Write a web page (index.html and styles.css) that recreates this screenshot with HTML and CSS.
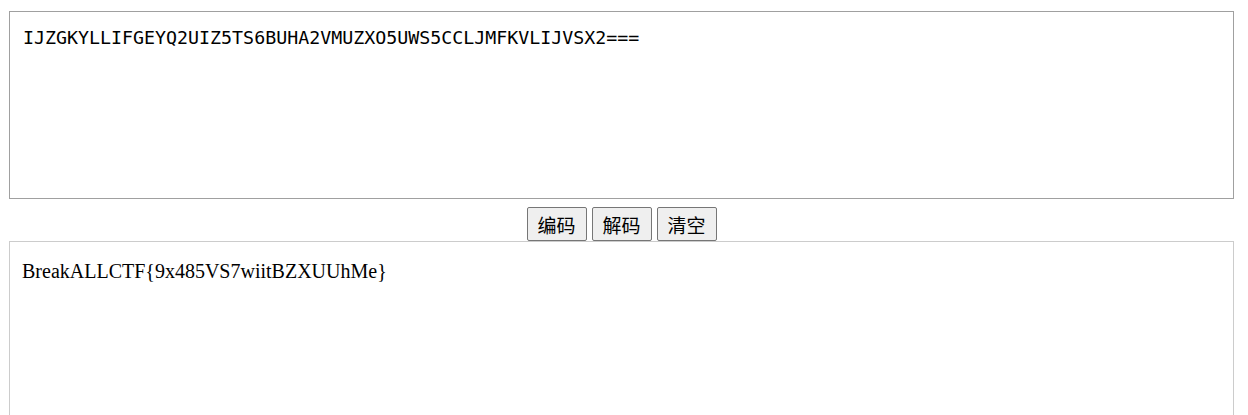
FILE: index.html
```html
<!DOCTYPE html>
<html lang="zh">
<head>
<meta charset="utf-8">
<title>Base32</title>
<link rel="stylesheet" href="styles.css">
</head>
<body>
<div class="page">
  <textarea class="input" spellcheck="false">IJZGKYLLIFGEYQ2UIZ5TS6BUHA2VMUZXO5UWS5CCLJMFKVLIJVSX2===</textarea>
  <div class="actions">
    <button class="btn" type="button">编码</button>
    <button class="btn" type="button">解码</button>
    <button class="btn" type="button">清空</button>
  </div>
  <div class="output">BreakALLCTF{9x485VS7wiitBZXUUhMe}</div>
</div>
</body>
</html>
```

FILE: styles.css
```css
html, body {
  margin: 0;
  padding: 0;
  background: #ffffff;
}
.page {
  padding: 11px 14px 0 9px;
  display: flex;
  flex-direction: column;
}
.input {
  display: block;
  box-sizing: border-box;
  width: 1225px;
  height: 188px;
  margin: 0;
  padding: 15px 13px;
  border: 1px solid #a0a0a0;
  font-family: "DejaVu Sans Mono", "Liberation Mono", monospace;
  font-size: 18.3px;
  color: #000;
  resize: none;
  outline: none;
}
.actions {
  display: flex;
  justify-content: center;
  gap: 5px;
  margin-top: 8px;
}
.btn {
  box-sizing: border-box;
  width: 60px;
  height: 34px;
  margin: 0;
  padding: 0;
  border: 1px solid #767676;
  border-radius: 2px;
  background: #efefef;
  color: #000;
  font-family: "Noto Sans CJK SC", sans-serif;
  font-size: 19px;
  line-height: 1;
}
.output {
  box-sizing: border-box;
  width: 1225px;
  height: 188px;
  border: 1px solid #cccccc;
  padding: 18px 12px;
  font-family: "Liberation Serif", serif;
  font-size: 20px;
  color: #000;
}
```
